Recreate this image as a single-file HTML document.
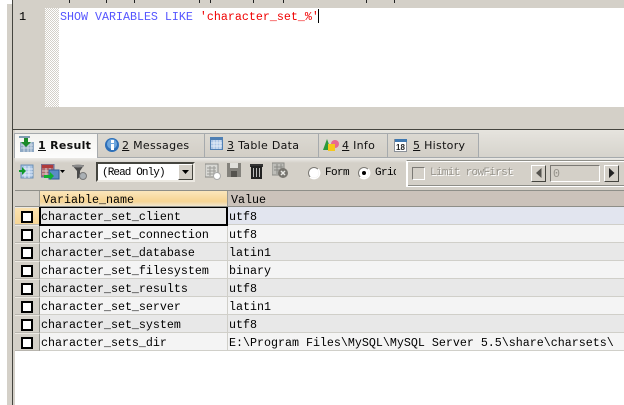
<!DOCTYPE html>
<html>
<head>
<meta charset="utf-8">
<style>
html,body{margin:0;padding:0;background:#fff;}
#p{position:relative;width:624px;height:405px;overflow:hidden;background:#fff;font-family:"Liberation Mono",monospace;font-size:11.67px;color:#000;}
#p div,#p span.a,#p svg{position:absolute;}
.t{white-space:pre;line-height:14px;}
.tab{top:133px;height:24px;box-sizing:border-box;border:1px solid #a6aaad;border-bottom:none;border-left:none;background:linear-gradient(#dcd9d2,#d2cec6);font:11px/24px "DejaVu Sans",sans-serif;white-space:pre;color:#111;letter-spacing:.3px;}
.tab u{text-decoration:underline;}
.rh{left:15px;width:25px;height:18px;box-sizing:border-box;background:#d4d0c8;border-right:1px solid #8e8e88;border-bottom:1px solid #b8b5ae;border-top:1px solid #ece9e2;}
.cb{left:21px;width:12px;height:12px;box-sizing:border-box;border:2px solid #000;background:#fff;}
.c1{left:40px;width:187px;height:18px;box-sizing:border-box;border-bottom:1px solid #d0cfc9;line-height:20px;padding-left:1px;white-space:pre;}
.c2{left:228px;width:396px;height:18px;box-sizing:border-box;border-bottom:1px solid #d0cfc9;line-height:20px;padding-left:1px;white-space:pre;}
.sep{width:1px;height:18px;left:227px;background:#d0cfc9;}
.o{background:#f4f4f4;}
.e{background:#e8e8e8;}
.m{width:1px;height:3px;top:0;background:#222;}
</style>
</head>
<body>
<div id="p">
<!-- left chrome -->
<div style="left:7px;top:4px;width:6px;height:401px;background:#d4d0c8;"></div>
<div style="left:12px;top:0;width:1px;height:405px;background:#45453f;"></div>
<div style="left:13px;top:0;width:611px;height:130px;background:#d4d0c8;"></div>
<div style="left:13px;top:130px;width:2px;height:275px;background:#d4d0c8;"></div>
<!-- top fragments -->
<div class="m" style="left:69px;"></div><div class="m" style="left:106px;"></div><div class="m" style="left:134px;"></div><div class="m" style="left:199px;"></div><div class="m" style="left:210px;"></div><div class="m" style="left:253px;"></div><div class="m" style="left:283px;"></div><div class="m" style="left:366px;"></div><div class="m" style="left:394px;"></div>
<!-- editor -->
<div style="left:45px;top:8px;width:579px;height:99px;background:#fff;"></div>
<div style="left:45px;top:8px;width:14px;height:99px;background-color:#fff;background-image:repeating-conic-gradient(#d4d0c8 0 25%,#fff 0 50%);background-size:2px 2px;"></div>
<div class="t" style="left:19px;top:10px;font-size:12px;">1</div>
<div class="t" style="left:60px;top:10px;color:#5555ff;">SHOW VARIABLES LIKE <span style="color:#f00000;">'character_set_%'</span></div>
<div style="left:318px;top:9px;width:1px;height:14px;background:#000;"></div>
<div style="left:13px;top:129px;width:611px;height:1px;background:#45453f;"></div>

<!-- tab strip -->
<div style="left:15px;top:130px;width:609px;height:27px;background:linear-gradient(#e6e4de,#d6d3cc);"></div>
<div style="left:15px;top:157px;width:609px;height:1px;background:#a6aaad;"></div>
<div style="left:15px;top:158px;width:609px;height:32px;background:linear-gradient(#ecebe7 0,#d4d0c8 5px);"></div>
<div style="left:15px;top:190px;width:609px;height:1px;background:#8e8e88;"></div>

<div class="tab" style="left:14px;width:84px;height:25px;background:linear-gradient(#f4f3f0,#fdfdfc);border-left:1px solid #a6aaad;padding-left:23px;font-weight:bold;"><u>1</u> Result</div>
<div class="tab" style="left:98px;width:107px;padding-left:24px;"><u>2</u> Messages</div>
<div class="tab" style="left:205px;width:114px;padding-left:22px;"><u>3</u> Table Data</div>
<div class="tab" style="left:319px;width:69px;padding-left:23px;"><u>4</u> Info</div>
<div class="tab" style="left:388px;width:91px;padding-left:25px;"><u>5</u> History</div>

<!-- tab icons -->
<svg style="left:19px;top:136px;" width="16" height="16"><rect x="0" y="0" width="11" height="2" fill="#7f9db0"/><rect x="1" y="6" width="14" height="10" fill="#8fa9c4"/><path d="M2 9h12M2 12h12M5 6v10M9 6v10M12 6v10" stroke="#d3dde8"/><path d="M5 2h4v4h3l-5 5-5-5h3z" fill="#1a8a2a"/></svg>
<svg style="left:104px;top:137px;" width="16" height="16"><circle cx="8" cy="8" r="7" fill="#2d6fb8"/><circle cx="8" cy="7" r="5" fill="#6ea6dc"/><rect x="7" y="7" width="3" height="6" fill="#fff"/><rect x="7" y="3" width="3" height="3" fill="#fff"/></svg>
<svg style="left:210px;top:137px;" width="14" height="14"><rect x=".5" y=".5" width="12" height="12" fill="#a9c4e4" stroke="#4f7fb3"/><rect x="1" y="1" width="11" height="2" fill="#4f7fb3"/><path d="M1 6h11M1 9h11M4 3v9M7 3v9M10 3v9" stroke="#e4edf7"/></svg>
<svg style="left:323px;top:139px;" width="17" height="12"><path d="M0 11 4 0l4 11z" fill="#2a9a3a"/><circle cx="12" cy="5" r="4" fill="#e86a90"/><rect x="5" y="5" width="7" height="7" fill="#f6c81a"/></svg>
<svg style="left:394px;top:138px;" width="14" height="15"><rect x=".5" y="1.500" width="12" height="12" fill="#fff" stroke="#8a9098"/><rect x="1" y="1" width="12" height="3" fill="#3f78b0"/><text x="2" y="12" font-family="Liberation Sans" font-size="8" font-weight="bold" fill="#222">18</text></svg>

<!-- toolbar icons -->
<svg style="left:19px;top:164px;" width="15" height="15"><rect x="2" y="1" width="12" height="13" fill="#a9c4e4" stroke="#6c8fb5"/><path d="M3 5h11M3 8h11M3 11h11M6 2v12M10 2v12" stroke="#e4edf7"/><path d="M0 6h3V3l4 4-4 4V8H0z" fill="#0e9a2a"/></svg>
<svg style="left:41px;top:164px;" width="20" height="16"><rect x="0" y="0" width="13" height="13" fill="#b06a6e" stroke="#5a6fa0"/><rect x="1" y="1" width="11" height="3" fill="#b03a3a"/><path d="M1 7h11M1 10h11M5 4v9M9 4v9" stroke="#dcc"/><rect x="8" y="6" width="10" height="9" fill="#5a8cc4" stroke="#2d5c94"/><path d="M3 11h6V8l4 4-4 4v-2H3z" fill="#12b030"/></svg>
<svg style="left:60px;top:170px;" width="5" height="3"><path d="M0 0h5L2.500 3z" fill="#000"/></svg>
<svg style="left:71px;top:164px;" width="17" height="16"><path d="M1 1h12L9 7v6l-3 2V7z" fill="#4a4a4a"/><ellipse cx="7" cy="2" rx="6" ry="1.500" fill="#8a8a8a"/><circle cx="12" cy="12" r="3.500" fill="#aab0b4" stroke="#777"/></svg>
<!-- combo -->
<div style="left:96px;top:162px;width:99px;height:20px;box-sizing:border-box;background:#fff;border:2px solid;border-color:#45453f #ece9e2 #ece9e2 #45453f;"></div>
<div class="t" style="left:102px;top:166px;font-size:11px;letter-spacing:-.9px;">(Read Only)</div>
<div style="left:178px;top:164px;width:15px;height:16px;box-sizing:border-box;background:#d4d0c8;border:1px solid;border-color:#fff #45453f #45453f #fff;"></div>
<svg style="left:182px;top:170px;" width="8" height="5"><path d="M0 0h7L3.500 4z" fill="#000"/></svg>

<svg style="left:205px;top:163px;" width="17" height="17"><rect x="0" y="1" width="13" height="13" fill="#d8d8d4" stroke="#8a8a86"/><path d="M2 5h9M2 8h9M2 11h9M5 3v10M9 3v10" stroke="#9a9a96"/><circle cx="12" cy="13" r="3.500" fill="#fff" stroke="#aaa"/></svg>
<svg style="left:227px;top:163px;" width="15" height="15"><rect x="0" y="0" width="14" height="14" fill="#84827c"/><rect x="3" y="0" width="8" height="5" fill="#e0dfda"/><rect x="4" y="8" width="6" height="6" fill="#55534e"/></svg>
<svg style="left:250px;top:163px;" width="13" height="17"><rect x="0" y="1" width="13" height="3" fill="#333"/><rect x="1" y="3" width="11" height="13" fill="#222"/><path d="M3.500 5v9M6.500 5v9M9.500 5v9" stroke="#bbb"/></svg>
<svg style="left:272px;top:162px;" width="17" height="17"><rect x="0" y="1" width="12" height="12" fill="#bdbdb8" stroke="#8a8a86"/><path d="M2 5h9M2 8h9M5 2v10M9 2v10" stroke="#8a8a86"/><circle cx="11" cy="11" r="5" fill="#77756f"/><path d="M9 9l4 4M13 9l-4 4" stroke="#e8e8e4" stroke-width="1.500"/></svg>

<!-- radios -->
<svg style="left:307px;top:166px;" width="14" height="14"><circle cx="7" cy="7" r="5.500" fill="#fff" stroke="#7b7974"/><path d="M11 3a5.500 5.500 0 0 1-8 8" fill="none" stroke="#fff" stroke-width="1.500"/></svg>
<div class="t" style="left:325px;top:166px;font-size:11px;letter-spacing:-.6px;">Form</div>
<svg style="left:357px;top:166px;" width="14" height="14"><circle cx="7" cy="7" r="5.500" fill="#fff" stroke="#7b7974"/><path d="M11 3a5.500 5.500 0 0 1-8 8" fill="none" stroke="#fff" stroke-width="1.500"/><circle cx="7" cy="7" r="2" fill="#000"/></svg>
<div style="left:375px;top:166px;width:21px;height:14px;overflow:hidden;"><div class="t" style="left:0;top:0;font-size:11px;letter-spacing:-.6px;">Grid</div></div>

<!-- limit group -->
<div style="left:406px;top:160px;width:218px;height:27px;box-sizing:border-box;border-left:1px solid #fff;border-bottom:1px solid #fff;border-top:1px solid #8e8e88;box-shadow:inset 1px 1px 0 #fff, inset 0 -1px 0 #8e8e88;"></div>
<div style="left:412px;top:167px;width:13px;height:13px;box-sizing:border-box;border:1px solid;border-color:#7b7974 #fff #fff #7b7974;"></div>
<div class="t" style="left:430px;top:166px;color:#96938b;text-shadow:1px 1px 0 #fff;font-size:11px;letter-spacing:-.67px;">Limit rowFirst</div>
<div style="left:531px;top:165px;width:15px;height:17px;box-sizing:border-box;background:#d4d0c8;border:1px solid;border-color:#fff #45453f #45453f #fff;"></div>
<svg style="left:536px;top:168px;" width="6" height="11"><path d="M5.500 0v10L0 5z" fill="#55534e"/></svg>
<div style="left:550px;top:165px;width:50px;height:17px;box-sizing:border-box;border:1px solid;border-color:#7b7974 #fff #fff #7b7974;"></div>
<div class="t" style="left:553px;top:167px;color:#96938b;">0</div>
<div style="left:604px;top:165px;width:15px;height:17px;box-sizing:border-box;background:#d4d0c8;border:1px solid;border-color:#fff #45453f #45453f #fff;"></div>
<svg style="left:609px;top:168px;" width="6" height="11"><path d="M0 0v10l5.500-5z" fill="#222"/></svg>

<!-- grid header -->
<div style="left:15px;top:191px;width:25px;height:16px;box-sizing:border-box;background:#d4d0c8;border-right:1px solid #9a9a94;"></div>
<div class="t" style="left:40px;top:191px;width:187px;height:16px;padding-left:3px;box-sizing:border-box;line-height:18px;background:linear-gradient(#fbe6bc,#f6d493 65%,#eeeadd);">Variable_name</div>
<div style="left:227px;top:191px;width:1px;height:16px;background:#9a9a94;"></div>
<div class="t" style="left:228px;top:191px;width:396px;height:16px;padding-left:3px;box-sizing:border-box;line-height:18px;background:#cbc2ba;">Value</div>
<div style="left:15px;top:206px;width:609px;height:1px;background:#8e8e88;"></div>

<!-- rows -->
<div class="rh" style="top:207px;background:linear-gradient(#fbe2b0,#f5d596);"></div><div class="cb" style="top:211px;"></div>
<div class="c1 e" style="top:207px;">character_set_client</div><div class="sep" style="top:207px;"></div><div class="c2" style="top:207px;background:#e2e5ef;">utf8</div>
<div class="rh" style="top:225px;"></div><div class="cb" style="top:229px;"></div>
<div class="c1 o" style="top:225px;">character_set_connection</div><div class="sep" style="top:225px;"></div><div class="c2 o" style="top:225px;">utf8</div>
<div class="rh" style="top:243px;"></div><div class="cb" style="top:247px;"></div>
<div class="c1 e" style="top:243px;">character_set_database</div><div class="sep" style="top:243px;"></div><div class="c2 e" style="top:243px;">latin1</div>
<div class="rh" style="top:261px;"></div><div class="cb" style="top:265px;"></div>
<div class="c1 o" style="top:261px;">character_set_filesystem</div><div class="sep" style="top:261px;"></div><div class="c2 o" style="top:261px;">binary</div>
<div class="rh" style="top:279px;"></div><div class="cb" style="top:283px;"></div>
<div class="c1 e" style="top:279px;">character_set_results</div><div class="sep" style="top:279px;"></div><div class="c2 e" style="top:279px;">utf8</div>
<div class="rh" style="top:297px;"></div><div class="cb" style="top:301px;"></div>
<div class="c1 o" style="top:297px;">character_set_server</div><div class="sep" style="top:297px;"></div><div class="c2 o" style="top:297px;">latin1</div>
<div class="rh" style="top:315px;"></div><div class="cb" style="top:319px;"></div>
<div class="c1 e" style="top:315px;">character_set_system</div><div class="sep" style="top:315px;"></div><div class="c2 e" style="top:315px;">utf8</div>
<div class="rh" style="top:333px;"></div><div class="cb" style="top:337px;"></div>
<div class="c1 o" style="top:333px;">character_sets_dir</div><div class="sep" style="top:333px;"></div><div class="c2 o" style="top:333px;">E:\Program Files\MySQL\MySQL Server 5.5\share\charsets\</div>
<!-- selected cell -->
<div style="left:39px;top:207px;width:189px;height:19px;box-sizing:border-box;border:2px solid #000;border-top-width:1px;"></div>
</div>
</body>
</html>
